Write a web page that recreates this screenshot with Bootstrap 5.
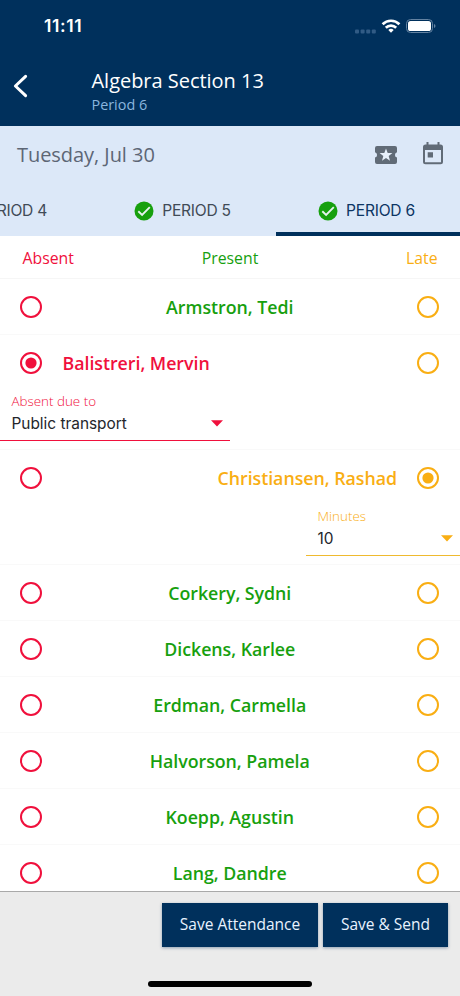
<!DOCTYPE html>
<html lang="en">
<head>
<meta charset="utf-8">
<meta name="viewport" content="width=device-width, initial-scale=1">
<title>Attendance</title>
<link href="https://cdn.jsdelivr.net/npm/bootstrap@5.3.0/dist/css/bootstrap.min.css" rel="stylesheet">
<style>
:root{--navy:#00305c;--absent:#f0103c;--present:#17a00e;--late:#f9ae13}
body{font-family:"Open Sans","Noto Sans",sans-serif;background:#fff;line-height:1.2}
.screen{width:460px;height:996px}
svg{display:block;flex:none}
.ui{font-family:Inter,"Liberation Sans",sans-serif}
.topbar{background:var(--navy);height:126px}
.status{height:50px;padding:1px 24px 0 44px}
.clock{font-size:17.5px;font-weight:600;letter-spacing:.6px}
.titlebar{height:76px;padding-left:13px}
.back{margin-bottom:4px}
.titles{padding:6px 0 0 62.5px}
.title{font-size:20px;line-height:27px;letter-spacing:-.03px}
.subtitle{font-size:14.4px;line-height:20px;color:#8ab6df;margin-top:1px}
.daybar{background:#dce8f8;height:110px}
.dateline{height:58px;padding:0 16px 0 17px}
.date{font-size:20px;letter-spacing:-.05px;color:#5d6675}
.tabs{height:52px}
.tab-item{width:184px;color:#414b57;font-size:15.6px;letter-spacing:-.25px;border-bottom:4px solid transparent;padding:6px 3px 0 0;gap:8px}
.tab-item span{padding-top:1px}
.tab-item.current{color:#0d3564;border-color:var(--navy)}
.tab-first{margin-left:-92px}
.legend{height:43px;padding:3px 22.5px 0;font-size:15.8px;border-bottom:1px solid #f6f6f6}
.c-absent{color:var(--absent)}
.c-present{color:var(--present)}
.c-late{color:var(--late)}
.roster{height:612px}
.student{height:56px;border-bottom:1px solid #f9f9f9}
.student.expanded{height:115px}
.pick{height:56px;padding:0 21px 0 20px}
.who{font-size:17.8px;letter-spacing:-.03px;font-weight:600;padding:2px 20px 0 20.5px}
.dropdown-field{width:230px;height:50px;border-bottom:1px solid currentColor;padding:2px 7px 0 11.5px}
.dropdown-field.narrow{width:154px;border-color:#efba2f}
.field-label{font-size:13.4px;line-height:16px;font-weight:300}
.field-value{font-size:15.4px;line-height:24px;color:#24262b;padding-top:2px}
.field-value span{padding-top:1px}
.actions{background:#ebebeb;height:105px;border-top:1px solid #a9a9a9;padding:11px 12px 0;gap:5px}
.action-btn{height:44px;padding:0 0 1px;border:0;border-radius:0;background:var(--navy);color:#e9f3ff;font-size:15.5px;box-shadow:0 1px 3px rgba(0,48,92,.4)}
.action-btn:hover{background:#0b4277;color:#fff}
.save{width:156px}
.send{width:125px}
.home{left:148px;bottom:9px;width:164px;height:6px;border-radius:3px;background:#000}
</style>
</head>
<body>
<svg width="0" height="0" class="position-absolute" aria-hidden="true">
<symbol id="off" viewBox="0 0 22 22"><circle cx="11" cy="11" r="10" fill="none" stroke="currentColor" stroke-width="2"/></symbol>
<symbol id="on" viewBox="0 0 22 22"><circle cx="11" cy="11" r="10" fill="none" stroke="currentColor" stroke-width="2"/><circle cx="11" cy="11" r="5.6" fill="currentColor"/></symbol>
<symbol id="check" viewBox="0 0 20 20"><circle cx="10" cy="10" r="9.5" fill="#17a00e"/><path d="M4.3 10.3l3.8 3.6 7.7-7.7" fill="none" stroke="#e6f3ee" stroke-width="1.9"/></symbol>
<symbol id="caret" viewBox="0 0 12 7"><path d="M0 .3h12L6 6.5z" fill="currentColor"/></symbol>
</svg>
<main class="screen position-relative overflow-hidden d-flex flex-column">
<header class="topbar text-white">
<div class="status ui d-flex align-items-center justify-content-between">
<span class="clock">11:11</span>
<svg width="81" height="16" viewBox="0 0 81 16"><g fill="#315b85"><rect x="0" y="11.5" width="4" height="4" rx="1"/><rect x="5.6" y="11.5" width="4" height="4" rx="1"/><rect x="11.2" y="11.5" width="4" height="4" rx="1"/><rect x="16.8" y="11.5" width="4" height="4" rx="1"/></g>
<g fill="none" stroke="#fff" stroke-width="2.7"><path d="M27.6 6.2a12 12 0 0 1 16.8 0"/><path d="M30.8 9.7a7.4 7.4 0 0 1 10.4 0"/></g><path d="M36 14.8l-2.7-2.8a3.9 3.9 0 0 1 5.4 0z" fill="#fff"/>
<rect x="51.5" y="1.5" width="26" height="13" rx="4" fill="none" stroke="#6382a1"/><rect x="53" y="3" width="23" height="10" rx="2.6" fill="#fff"/><path d="M79 6c2 .8 2 3.2 0 4z" fill="#6382a1"/></svg>
</div>
<div class="titlebar d-flex align-items-center">
<svg class="back" width="16" height="24" viewBox="0 0 16 24"><path d="M12.6 2.3L2.4 12l10.2 9.7" fill="none" stroke="#fff" stroke-width="3" stroke-linecap="round" stroke-linejoin="round"/></svg>
<div class="titles"><div class="title">Algebra Section 13</div><div class="subtitle">Period 6</div></div>
</div>
</header>
<section class="daybar overflow-hidden">
<div class="dateline d-flex align-items-center">
<span class="date me-auto">Tuesday, Jul 30</span>
<svg width="24" height="20" viewBox="0 0 24 20"><path d="M3 1h18a2 2 0 0 1 2 2v4.2a2.8 2.8 0 0 0 0 5.4V17a2 2 0 0 1-2 2H3a2 2 0 0 1-2-2v-4.4a2.8 2.8 0 0 0 0-5.4V3a2 2 0 0 1 2-2z" fill="#616b77"/><path d="M12 3.4l1.7 4.5 4.7.2-3.7 3 1.3 4.6-4-2.6-4 2.6 1.3-4.6-3.7-3 4.7-.2z" fill="#e6effa"/></svg>
<svg class="ms-4 mb-1" width="22" height="24" viewBox="0 0 22 24"><path d="M3.5 3.5h1V1h2v2.5h9V1h2v2.5h1A2.5 2.5 0 0 1 21 6v14.8a2.5 2.5 0 0 1-2.5 2.5h-15A2.5 2.5 0 0 1 1 20.800V6A2.5 2.5 0 0 1 3.500 3.500zM3 9v12.300h16V9zM5.700 11.200h5.300v5.200H5.700z" fill="#616b77" fill-rule="evenodd"/></svg>
</div>
<nav class="tabs ui d-flex">
<div class="tab-item tab-first flex-shrink-0 d-flex align-items-center justify-content-center"><svg width="20" height="20"><use href="#check"/></svg><span>PERIOD 4</span></div>
<div class="tab-item flex-shrink-0 d-flex align-items-center justify-content-center"><svg width="20" height="20"><use href="#check"/></svg><span>PERIOD 5</span></div>
<div class="tab-item current flex-shrink-0 d-flex align-items-center justify-content-center"><svg width="20" height="20"><use href="#check"/></svg><span>PERIOD 6</span></div>
</nav>
</section>
<div class="legend d-flex align-items-center"><span class="c-absent col text-start">Absent</span><span class="c-present">Present</span><span class="c-late col text-end">Late</span></div>
<section class="roster overflow-hidden">
<div class="student"><div class="pick d-flex align-items-center"><svg class="c-absent" width="22" height="22"><use href="#off"/></svg><span class="who c-present flex-fill text-center">Armstron, Tedi</span><svg class="c-late" width="22" height="22"><use href="#off"/></svg></div></div>
<div class="student expanded"><div class="pick d-flex align-items-center"><svg class="c-absent" width="22" height="22"><use href="#on"/></svg><span class="who c-absent flex-fill">Balistreri, Mervin</span><svg class="c-late" width="22" height="22"><use href="#off"/></svg></div>
<div class="dropdown-field c-absent"><div class="field-label">Absent due to</div><div class="field-value ui d-flex align-items-center justify-content-between"><span>Public transport</span><svg class="c-absent" width="12" height="7"><use href="#caret"/></svg></div></div></div>
<div class="student expanded"><div class="pick d-flex align-items-center"><svg class="c-absent" width="22" height="22"><use href="#off"/></svg><span class="who c-late flex-fill text-end">Christiansen, Rashad</span><svg class="c-late" width="22" height="22"><use href="#on"/></svg></div>
<div class="dropdown-field narrow c-late ms-auto"><div class="field-label">Minutes</div><div class="field-value ui d-flex align-items-center justify-content-between"><span>10</span><svg class="c-late" width="12" height="7"><use href="#caret"/></svg></div></div></div>
<div class="student"><div class="pick d-flex align-items-center"><svg class="c-absent" width="22" height="22"><use href="#off"/></svg><span class="who c-present flex-fill text-center">Corkery, Sydni</span><svg class="c-late" width="22" height="22"><use href="#off"/></svg></div></div>
<div class="student"><div class="pick d-flex align-items-center"><svg class="c-absent" width="22" height="22"><use href="#off"/></svg><span class="who c-present flex-fill text-center">Dickens, Karlee</span><svg class="c-late" width="22" height="22"><use href="#off"/></svg></div></div>
<div class="student"><div class="pick d-flex align-items-center"><svg class="c-absent" width="22" height="22"><use href="#off"/></svg><span class="who c-present flex-fill text-center">Erdman, Carmella</span><svg class="c-late" width="22" height="22"><use href="#off"/></svg></div></div>
<div class="student"><div class="pick d-flex align-items-center"><svg class="c-absent" width="22" height="22"><use href="#off"/></svg><span class="who c-present flex-fill text-center">Halvorson, Pamela</span><svg class="c-late" width="22" height="22"><use href="#off"/></svg></div></div>
<div class="student"><div class="pick d-flex align-items-center"><svg class="c-absent" width="22" height="22"><use href="#off"/></svg><span class="who c-present flex-fill text-center">Koepp, Agustin</span><svg class="c-late" width="22" height="22"><use href="#off"/></svg></div></div>
<div class="student"><div class="pick d-flex align-items-center"><svg class="c-absent" width="22" height="22"><use href="#off"/></svg><span class="who c-present flex-fill text-center">Lang, Dandre</span><svg class="c-late" width="22" height="22"><use href="#off"/></svg></div></div>
</section>
<footer class="actions d-flex justify-content-end align-items-start">
<button class="btn action-btn save" type="button">Save Attendance</button>
<button class="btn action-btn send" type="button">Save &amp; Send</button>
</footer>
<div class="home position-absolute"></div>
</main>
<script src="https://cdn.jsdelivr.net/npm/bootstrap@5.3.0/dist/js/bootstrap.bundle.min.js"></script>
</body>
</html>
